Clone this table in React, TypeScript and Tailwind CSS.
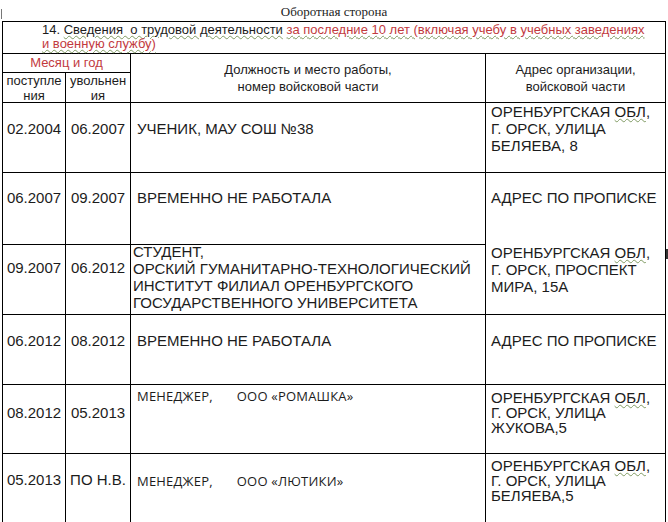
import React from "react";

const arial = "font-['Liberation_Sans',Arial,sans-serif]";
const wavy = "underline decoration-wavy decoration-[#7f9a62] decoration-1 underline-offset-[1px]";

type Row = {
  from: string;
  to: string;
  job: React.ReactNode;
  addr: string[];
  datePt: string;
  jobPt: string;
  addrPt: string;
  addrLeading: string;
};

function Addr({ lines }: { lines: string[] }) {
  return (
    <>
      {lines.map((line, i) => (
        <div key={i}>
          {line.startsWith("ОРЕНБУРГСКАЯ ОБЛ") ? (
            <>
              ОРЕНБУРГСКАЯ <span className={wavy}>ОБЛ</span>,
            </>
          ) : (
            line
          )}
        </div>
      ))}
    </>
  );
}

function Manager({ org }: { org: string }) {
  return (
    <span className="font-['Open_Sans','Noto_Sans',sans-serif] text-[13px] tracking-[0.2px]">
      МЕНЕДЖЕР,
      <span className="ml-[24px]">ООО «{org}»</span>
    </span>
  );
}

const rows: Row[] = [
  {
    from: "02.2004",
    to: "06.2007",
    job: "УЧЕНИК, МАУ СОШ №38",
    addr: ["ОРЕНБУРГСКАЯ ОБЛ,", "Г. ОРСК, УЛИЦА", "БЕЛЯЕВА, 8"],
    datePt: "pt-[17px]",
    jobPt: "pt-[17px] pl-[6px]",
    addrPt: "pt-0",
    addrLeading: "leading-[17px]",
  },
  {
    from: "06.2007",
    to: "09.2007",
    job: "ВРЕМЕННО НЕ РАБОТАЛА",
    addr: ["АДРЕС ПО ПРОПИСКЕ"],
    datePt: "pt-[16px]",
    jobPt: "pt-[16px] pl-[6px]",
    addrPt: "pt-[16px]",
    addrLeading: "leading-[17px]",
  },
  {
    from: "09.2007",
    to: "06.2012",
    job: (
      <div className="-mt-[2px]">
        СТУДЕНТ,
        <br />
        ОРСКИЙ ГУМАНИТАРНО-ТЕХНОЛОГИЧЕСКИЙ
        <br />
        ИНСТИТУТ ФИЛИАЛ ОРЕНБУРГСКОГО
        <br />
        ГОСУДАРСТВЕННОГО УНИВЕРСИТЕТА
      </div>
    ),
    addr: ["ОРЕНБУРГСКАЯ ОБЛ,", "Г. ОРСК, ПРОСПЕКТ", "МИРА, 15А"],
    datePt: "pt-[14px]",
    jobPt: "pt-0 pl-[2px]",
    addrPt: "-mt-[1px]",
    addrLeading: "leading-[17px]",
  },
  {
    from: "06.2012",
    to: "08.2012",
    job: "ВРЕМЕННО НЕ РАБОТАЛА",
    addr: ["АДРЕС ПО ПРОПИСКЕ"],
    datePt: "pt-[17px]",
    jobPt: "pt-[17px] pl-[6px]",
    addrPt: "pt-[17px]",
    addrLeading: "leading-[17px]",
  },
  {
    from: "08.2012",
    to: "05.2013",
    job: <Manager org="РОМАШКА" />,
    addr: ["ОРЕНБУРГСКАЯ ОБЛ,", "Г. ОРСК, УЛИЦА", "ЖУКОВА,5"],
    datePt: "pt-[19px]",
    jobPt: "pt-[2px] pl-[6px]",
    addrPt: "pt-[5px]",
    addrLeading: "leading-[15px]",
  },
  {
    from: "05.2013",
    to: "ПО Н.В.",
    job: <Manager org="ЛЮТИКИ" />,
    addr: ["ОРЕНБУРГСКАЯ ОБЛ,", "Г. ОРСК, УЛИЦА", "БЕЛЯЕВА,5"],
    datePt: "pt-[17px]",
    jobPt: "pt-[18px] pl-[6px]",
    addrPt: "pt-[4px]",
    addrLeading: "leading-[15px]",
  },
];

export default function App() {
  return (
    <div className={`relative w-[668px] h-[522px] overflow-hidden bg-white text-[#1c1c1c] ${arial}`}>
      {/* page header */}
      <div className="relative h-[21px] flex items-center justify-center">
        <div className="absolute left-[1px] top-[9px] w-px h-[10px] bg-[#777]" />
        <span className="font-['Liberation_Serif','Times_New_Roman',serif] text-[13px] leading-none pt-[1px]">
          Оборотная сторона
        </span>
      </div>

      <div className="ml-[2px] w-[664px] grid grid-cols-[62px_64px_354px_179px] grid-rows-[31px_18px_29px_69px_71px_69px_69px_68px_68px] gap-px bg-black border-l border-r border-t border-black">
        {/* section title */}
        <div className="col-span-4 bg-white pl-[39px] pt-[1px] text-[13px] leading-[14px] whitespace-nowrap">
          <div>
            14. <span className={wavy}>Сведения&nbsp; о трудовой деятельности</span>{" "}
            <span className={`text-[#c23a3e] ${wavy}`}>
              за последние 10 лет (включая учебу в учебных заведениях
            </span>
          </div>
          <div>
            <span className={`text-[#c23a3e] ${wavy}`}>и военную службу)</span>
          </div>
        </div>

        {/* column headers */}
        <div className="col-span-2 bg-white flex items-center justify-center text-[13px] leading-[14px] text-[#c23a3e]">
          Месяц и год
        </div>
        <div className="row-span-2 bg-white flex items-center justify-center text-center text-[13px] leading-[17px]">
          <div>
            Должность и место работы,
            <br />
            номер войсковой части
          </div>
        </div>
        <div className="row-span-2 bg-white flex items-center justify-center text-center text-[13px] leading-[17px]">
          <div>
            Адрес организации,
            <br />
            войсковой части
          </div>
        </div>
        <div className="bg-white flex items-center justify-center text-center text-[13px] leading-[15px]">
          <div>
            поступле
            <br />
            ния
          </div>
        </div>
        <div className="bg-white flex items-center justify-center text-center text-[13px] leading-[15px]">
          <div>
            увольнен
            <br />
            ия
          </div>
        </div>

        {/* rows */}
        {rows.map((r) => (
          <React.Fragment key={r.from}>
            <div className={`bg-white text-center text-[15px] leading-[17px] ${r.datePt}`}>{r.from}</div>
            <div className={`bg-white text-center text-[15px] leading-[17px] whitespace-nowrap ${r.datePt}`}>{r.to}</div>
            <div className={`bg-white text-[15px] leading-[17px] whitespace-nowrap ${r.jobPt}`}>{r.job}</div>
            <div className={`bg-white pl-[5px] text-[15px] whitespace-nowrap ${r.addrLeading} ${r.addrPt}`}>
              <Addr lines={r.addr} />
            </div>
          </React.Fragment>
        ))}
      </div>

      <div className="absolute left-[666px] top-[249px] w-[2px] h-[10px] bg-[#333]" />
    </div>
  );
}
